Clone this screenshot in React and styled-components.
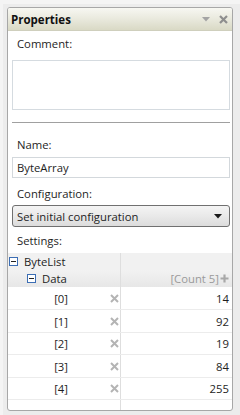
import React from "react"
import styled, { createGlobalStyle } from "styled-components"

const GlobalStyle = createGlobalStyle`
  html, body {
    margin: 0;
    padding: 0;
    background: #ececec;
  }
  body {
    font-family: "Open Sans", "Noto Sans", sans-serif;
    font-size: 11.3px;
    color: #1e1e1e;
  }
`

const items = [
  { index: 0, value: 14, height: 23 },
  { index: 1, value: 92, height: 23 },
  { index: 2, value: 19, height: 22 },
  { index: 3, value: 84, height: 23 },
  { index: 4, value: 255, height: 22 },
]

const App = () => {
  return (
    <>
      <GlobalStyle />
      <Frame>
        <Panel>
          <TitleBar>
            <Title>Properties</Title>
            <TitleIcons>
              <svg width="8" height="5" viewBox="0 0 8 5">
                <path d="M0 0 H8 L4 4.5 Z" fill="#a4a4a4" />
              </svg>
              <svg width="9" height="9" viewBox="0 0 9 9">
                <path d="M1 1 L8 8 M8 1 L1 8" stroke="#8e8e8e" strokeWidth="2.2" />
              </svg>
            </TitleIcons>
          </TitleBar>
          <Form>
            <Label gap={8}>Comment:</Label>
            <TextArea />
            <Separator />
            <Label gap={4}>Name:</Label>
            <TextBox>ByteArray</TextBox>
            <Label gap={3}>Configuration:</Label>
            <Select>
              <span>Set initial configuration</span>
              <svg width="8" height="5" viewBox="0 0 8 5">
                <path d="M0 0 H8 L4 4.5 Z" fill="#1a1a1a" />
              </svg>
            </Select>
            <Label gap={4}>Settings:</Label>
          </Form>
          <Grid>
            <HeaderRow>
              <NameCell indent={1}>
                <Expander />
                ByteList
              </NameCell>
              <ValueCell />
            </HeaderRow>
            <HeaderRow shaded>
              <NameCell indent={19}>
                <Expander />
                Data
              </NameCell>
              <ValueCell>
                <Count>[Count 5]</Count>
                <svg width="9" height="9" viewBox="0 0 9 9">
                  <path d="M4.5 0.5 V8.5 M0.5 4.5 H8.5" stroke="#a8a8a8" strokeWidth="2.2" />
                </svg>
              </ValueCell>
            </HeaderRow>
            {items.map((item) => (
              <ItemRow key={item.index} h={item.height}>
                <NameCell>
                  <Index>[{item.index}]</Index>
                  <Remove>
                    <svg width="9" height="9" viewBox="0 0 9 9">
                      <path d="M1 1 L8 8 M8 1 L1 8" stroke="#b4b4b4" strokeWidth="2" />
                    </svg>
                  </Remove>
                </NameCell>
                <ValueCell>{item.value}</ValueCell>
              </ItemRow>
            ))}
            <EmptyRow>
              <NameCell />
              <ValueCell />
            </EmptyRow>
          </Grid>
        </Panel>
      </Frame>
    </>
  )
}

export default App

const Frame = styled.div`
  width: 240px;
  height: 415px;
  box-sizing: border-box;
  border-top: 4px solid #f4f4f4;
  border-left: 3px solid #f4f4f4;
  padding: 3px 7px 4px 4px;
`

const Panel = styled.div`
  height: 404px;
  box-sizing: border-box;
  border: 1px solid #a7a7a7;
  border-radius: 3px;
  background: #fff;
  display: flex;
  flex-direction: column;
  overflow: hidden;
`

const TitleBar = styled.div`
  height: 22px;
  display: flex;
  align-items: center;
  justify-content: space-between;
  padding: 0 4px 0 3px;
  background: linear-gradient(#f7f7f2, #e9e9dd 50%, #d9d9c5);
  border-bottom: 1px solid #cfcfbd;
`

const Title = styled.div`
  font-weight: 700;
  font-size: 11.5px;
  color: #111;
`

const TitleIcons = styled.div`
  display: flex;
  align-items: center;
  gap: 9px;
`

const Form = styled.div`
  display: flex;
  flex-direction: column;
  padding: 5px 2px 0 4px;
`

const Label = styled.div`
  height: 16px;
  line-height: 16px;
  padding-left: 5px;
  margin-bottom: ${({ gap }) => gap}px;
`

const TextArea = styled.div`
  height: 50px;
  box-sizing: border-box;
  border: 1px solid #d5dbe0;
  margin-bottom: 12px;
`

const Separator = styled.div`
  height: 1px;
  background: #a0a0a0;
  margin-bottom: 14px;
`

const TextBox = styled.div`
  height: 21px;
  box-sizing: border-box;
  border: 1px solid #d3d8dc;
  padding-left: 4px;
  line-height: 19px;
  margin-bottom: 8px;
`

const Select = styled.div`
  height: 22px;
  box-sizing: border-box;
  border: 1px solid #707070;
  border-radius: 3px;
  background: linear-gradient(#f4f4f4, #e9e9e9 50%, #dcdcdc);
  display: flex;
  align-items: center;
  justify-content: space-between;
  padding: 0 7px 0 4px;
  margin-bottom: 6px;
`

const Grid = styled.div`
  flex: 1;
  display: flex;
  flex-direction: column;
`

const Row = styled.div`
  display: grid;
  grid-template-columns: 113px 1fr;
`

const HeaderRow = styled(Row)`
  height: 17px;
  background: ${({ shaded }) =>
    shaded ? "linear-gradient(#f2f2f2, #e7e7e7)" : "#f1f1f1"};
`

const ItemRow = styled(Row)`
  height: ${({ h }) => h}px;
  border-bottom: 1px solid #ececec;
  box-sizing: border-box;
`

const EmptyRow = styled(Row)`
  flex: 1;
`

const NameCell = styled.div`
  display: flex;
  align-items: center;
  gap: 6px;
  padding-left: ${({ indent }) => indent || 0}px;
  border-right: 1px solid #dedede;
`

const ValueCell = styled.div`
  display: flex;
  align-items: center;
  justify-content: flex-end;
  gap: 1px;
  padding-right: 3px;
`

const Expander = styled.span`
  width: 9px;
  height: 9px;
  box-sizing: border-box;
  border: 1px solid #3c6eb4;
  background: #fff;
  position: relative;
  &::after {
    content: "";
    position: absolute;
    left: 1px;
    right: 1px;
    top: 3px;
    height: 1px;
    background: #222;
  }
`

const Count = styled.span`
  color: #9a9a9a;
`

const Index = styled.span`
  width: 60px;
  text-align: right;
`

const Remove = styled.span`
  margin-left: auto;
  margin-right: 1px;
  display: flex;
`
